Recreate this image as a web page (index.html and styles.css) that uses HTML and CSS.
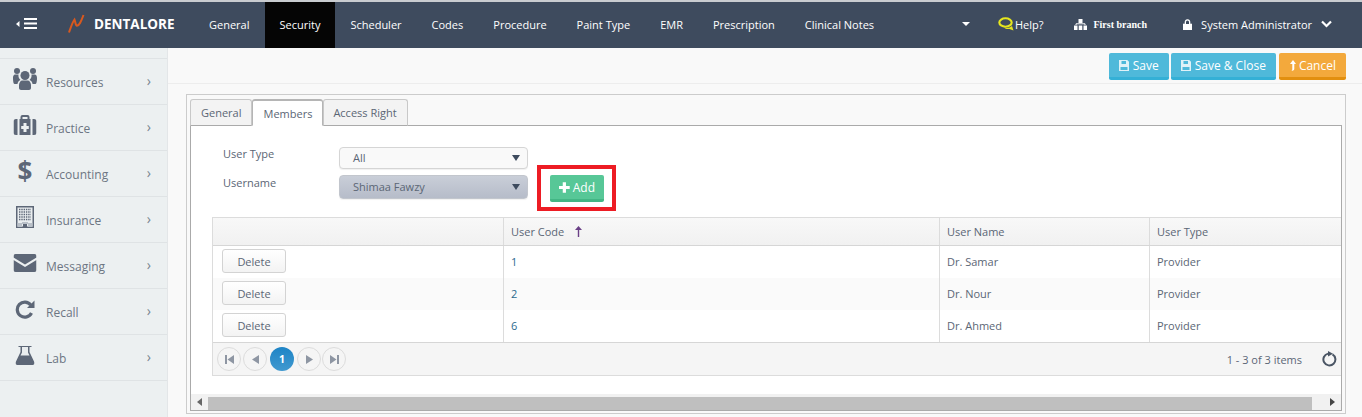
FILE: index.html
```html
<!DOCTYPE html>
<html lang="en">
<head>
<meta charset="utf-8">
<title>Dentalore - Security</title>
<link rel="stylesheet" href="styles.css">
</head>
<body>
<header class="topbar">
  <div class="toggle">
    <svg width="21" height="12" viewBox="0 0 21 12"><path d="M0 6l3.500-3v6z" fill="#fff"/><path d="M8 1h13M8 5.500h13M8 10h13" stroke="#fff" stroke-width="2"/></svg>
  </div>
  <div class="brand">
    <svg width="18" height="20" viewBox="0 0 18 20"><path d="M1 18.500C3 13 4.500 8 6.500 5.500c.8 2 .8 4.800 2 6 2.500 1 4.800-4.500 7-10.500" fill="none" stroke="#d8591f" stroke-width="2"/></svg>
    <span>DENTALORE</span>
  </div>
  <nav class="mainnav">
    <a>General</a><a class="active">Security</a><a>Scheduler</a><a>Codes</a><a>Procedure</a><a>Paint Type</a><a>EMR</a><a>Prescription</a><a>Clinical Notes</a>
  </nav>
  <div class="topright">
    <span class="caret"></span>
    <span class="help">
      <svg width="17" height="14" viewBox="0 0 17 14"><ellipse cx="7.500" cy="5.500" rx="6.200" ry="4.200" fill="none" stroke="#e6e61e" stroke-width="2.100"/><path d="M6 10.500c3 .8 6 .5 8-1.500l1.500 4.500-4-1.500c-2 .3-4 0-5.500-1.500z" fill="#e6e61e"/></svg>Help?
    </span>
    <span class="branch">
      <svg width="13" height="11" viewBox="0 0 13 11"><path d="M4.500 0h4v4h-4zM0 6.500h3.500V11H0zM4.700 6.500h3.600V11H4.700zM9.500 6.500H13V11H9.500z" fill="#fff"/><path d="M2 6V4.800h9V6" fill="none" stroke="#fff"/></svg>
      <b>First branch</b>
    </span>
    <span class="user">
      <svg width="9" height="11" viewBox="0 0 9 11"><path d="M0 5h9v6H0zM2 5V3a2.500 2.500 0 015 0v2" fill="#fff" stroke="#fff" stroke-width=".6"/><path d="M3 5V3a1.500 1.500 0 013 0v2" fill="#3e4b5e"/></svg>
      System Administrator
      <svg class="chev" width="11" height="8" viewBox="0 0 11 8"><path d="M1 1.500l4.500 4.500L10 1.500" fill="none" stroke="#fff" stroke-width="2.200"/></svg>
    </span>
  </div>
</header>

<div class="body">
  <aside class="sidebar">
    <div class="side-item">
      <svg class="side-ico" width="24" height="22" viewBox="0 0 24 22"><g fill="#5d6777"><circle cx="4" cy="3" r="3"/><circle cx="20" cy="3" r="3"/><circle cx="12" cy="7.500" r="4.500"/><path d="M0 10c0-3 1.500-3.500 2.500-3.500h3c-.3 2 .3 4 2 5.500C5.500 13 4.500 14.500 4.500 16H1.500C.5 16 0 13 0 10zM24 10c0-3-1.500-3.500-2.500-3.500h-3c.3 2-.3 4-2 5.500 2 1 3 2.500 3 4h3c1 0 1.500-3 1.500-5.500zM6 17c0-2.500 2-4.500 3-4.500h6c1 0 3 2 3 4.500v3c0 1-1 2-2 2H8c-1 0-2-1-2-2z"/></g></svg>
      <span class="side-label">Resources</span><span class="side-arrow">›</span>
    </div>
    <div class="side-item">
      <svg class="side-ico" width="23" height="20" viewBox="0 0 23 20"><path fill="#5d6777" fill-rule="evenodd" d="M7 4V2a2 2 0 012-2h5a2 2 0 012 2v2h1v16H6V4zm2 0h5V2H9zM10 8v3H7.700v3H10v3h3v-3h2.300v-3H13V8z"/><path fill="#5d6777" d="M0 6.500A2.500 2.500 0 012.500 4H4v16H2.500A2.500 2.500 0 010 17.500zM23 6.500A2.500 2.500 0 0020.500 4H19v16h1.500a2.500 2.500 0 002.500-2.500z"/></svg>
      <span class="side-label">Practice</span><span class="side-arrow">›</span>
    </div>
    <div class="side-item">
      <span class="side-ico dollar">$</span>
      <span class="side-label">Accounting</span><span class="side-arrow">›</span>
    </div>
    <div class="side-item">
      <svg class="side-ico" width="18" height="22" viewBox="0 0 18 22"><rect width="18" height="22" fill="#5d6777"/><rect x="1.500" y="1.500" width="15" height="19" fill="#e9edef"/><path d="M3 3.500h12M3 6h12M3 8.500h12M3 11h12M3 13.500h12" stroke="#5d6777" stroke-width="1.300" stroke-dasharray="1.400 .9"/><path d="M1.500 17h4.500v4H1.500zM12 17h4.500v4H12zM6 16h6v2H6z" fill="#b9c0c8"/><rect x="7" y="18" width="4" height="4" fill="#5d6777"/></svg>
      <span class="side-label">Insurance</span><span class="side-arrow">›</span>
    </div>
    <div class="side-item">
      <svg class="side-ico" width="23" height="18" viewBox="0 0 23 18"><path fill="#5d6777" d="M2 0h19a2 2 0 012 2v1.600l-11.500 7L0 3.600V2a2 2 0 012-2zM0 6l11.500 7L23 6v10a2 2 0 01-2 2H2a2 2 0 01-2-2z"/></svg>
      <span class="side-label">Messaging</span><span class="side-arrow">›</span>
    </div>
    <div class="side-item">
      <svg class="side-ico" width="20" height="20" viewBox="0 0 20 20"><path fill="none" stroke="#5d6777" stroke-width="3.200" d="M16.500 14a7.500 7.500 0 11-.8-8"/><path fill="#5d6777" d="M19.500 1.500v7.500h-7.500z"/></svg>
      <span class="side-label">Recall</span><span class="side-arrow">›</span>
    </div>
    <div class="side-item">
      <svg class="side-ico" width="19" height="20" viewBox="0 0 19 20"><path fill="#5d6777" d="M3 1h13v1h-2v5l5 10.500c.3 1-.5 2.500-2 2.500H2C.5 20-.3 18.500 0 17.500L5 7V2H3z"/><path fill="#e9edef" d="M6.500 2h6v5.500l1.500 3H5l1.500-3z"/></svg>
      <span class="side-label">Lab</span><span class="side-arrow">›</span>
    </div>
  </aside>

  <main class="content">
    <div class="toolbar">
      <button class="btn info">
        <svg width="10" height="11" viewBox="0 0 10 11"><path fill="#dff2f8" fill-rule="evenodd" d="M0 0h8.200L10 1.800V11H0zm2.500 1v3h4.500V1zm-1 6v3h7V7z"/></svg>Save</button>
      <button class="btn info">
        <svg width="10" height="11" viewBox="0 0 10 11"><path fill="#dff2f8" fill-rule="evenodd" d="M0 0h8.200L10 1.800V11H0zm2.500 1v3h4.500V1zm-1 6v3h7V7z"/></svg>Save &amp; Close</button>
      <button class="btn warn">
        <svg width="6" height="11" viewBox="0 0 6 11"><path fill="#fff" d="M3 0l3 4H4.300v4.500c0 1 0 2-3 2.500 1-.7 1-1.500 1-2.500V4H0z"/></svg>Cancel</button>
    </div>

    <section class="panel">
      <div class="tabs">
        <span class="tab">General</span>
        <span class="tab current">Members</span>
        <span class="tab last">Access Right</span>
      </div>
      <div class="tabbody">
        <div class="form">
          <div class="fields">
            <label class="flabel">User Type</label>
            <div class="select"><span>All</span><i class="sel-caret"></i></div>
            <label class="flabel lower">Username</label>
            <div class="select filled"><span>Shimaa Fawzy</span><i class="sel-caret"></i></div>
          </div>
          <div class="highlight">
            <button class="btn add">
              <svg width="11" height="11" viewBox="0 0 10 10"><path fill="#fff" d="M3.500 0h3v3.500H10v3H6.500V10h-3V6.500H0v-3h3.500z"/></svg>Add</button>
          </div>
        </div>

        <div class="grid">
          <div class="row head">
            <div class="cell c1"></div>
            <div class="cell c2">User Code
              <svg class="sort" width="7" height="11" viewBox="0 0 7 11"><path fill="#6a3f86" d="M3.500 0L7 4H4.200v7H2.800V4H0z"/></svg>
            </div>
            <div class="cell c3">User Name</div>
            <div class="cell c4">User Type</div>
          </div>
          <div class="row data">
            <div class="cell c1"><button class="del">Delete</button></div>
            <div class="cell c2 link">1</div>
            <div class="cell c3">Dr. Samar</div>
            <div class="cell c4">Provider</div>
          </div>
          <div class="row data alt">
            <div class="cell c1"><button class="del">Delete</button></div>
            <div class="cell c2 link">2</div>
            <div class="cell c3">Dr. Nour</div>
            <div class="cell c4">Provider</div>
          </div>
          <div class="row data">
            <div class="cell c1"><button class="del">Delete</button></div>
            <div class="cell c2 link">6</div>
            <div class="cell c3">Dr. Ahmed</div>
            <div class="cell c4">Provider</div>
          </div>
          <div class="pager">
            <span class="pg"><svg width="9" height="9" viewBox="0 0 9 9"><path fill="#8e96a3" d="M0 0h2v9H0zM9 0v9L2.500 4.500z"/></svg></span>
            <span class="pg"><svg width="7" height="9" viewBox="0 0 7 9"><path fill="#8e96a3" d="M7 0v9L0 4.500z"/></svg></span>
            <span class="pg now">1</span>
            <span class="pg"><svg width="7" height="9" viewBox="0 0 7 9"><path fill="#8e96a3" d="M0 0v9l7-4.500z"/></svg></span>
            <span class="pg tail"><svg width="9" height="9" viewBox="0 0 9 9"><path fill="#8e96a3" d="M9 0H7v9h2zM0 0v9l6.500-4.500z"/></svg></span>
            <span class="pg-info">1 - 3 of 3 items</span>
            <svg class="refresh" width="15" height="16" viewBox="0 0 15 16"><path fill="none" stroke="#4a5564" stroke-width="2" d="M10.500 3.300a6 6 0 11-4.500-.7"/><path fill="#4a5564" d="M6 0l5 2.800L6 5.500z"/></svg>
          </div>
        </div>

        <div class="hscroll">
          <span class="sbtn"><i class="tri left"></i></span>
          <span class="thumb"></span>
          <span class="sbtn end"><i class="tri right"></i></span>
        </div>
      </div>
    </section>
  </main>
</div>
</body>
</html>
```

FILE: styles.css
```css
* { box-sizing: border-box; }
html, body { margin: 0; height: 417px; overflow: hidden; }
body { font-family: "Open Sans", sans-serif; font-size: 11px; color: #5b6675; background: #f9f9f9; }
button { font-family: inherit; cursor: pointer; }

.topbar { height: 48px; background: #3e4b5e; border-top: 2px solid #c9ccd0; color: #fff; display: flex; align-items: flex-start; }
.toggle { width: 68px; height: 44px; padding-left: 16px; display: flex; align-items: center; }
.brand { width: 126px; height: 44px; display: flex; align-items: center; gap: 8px; font-weight: 700; font-size: 13.500px; color: #fff; }
.mainnav { display: flex; height: 46px; }
.mainnav a { display: flex; align-items: center; padding: 0 15px 2px; font-size: 11px; color: #fff; }
.mainnav a.active { background: #050505; margin-left: 1px; padding-left: 14px; }
.topright { margin-left: auto; height: 44px; display: flex; align-items: center; padding-right: 30px; font-size: 11px; }
.caret { width: 0; height: 0; border: 4px solid transparent; border-top-color: #fff; border-bottom: 0; margin-right: 29px; }
.help { display: flex; align-items: center; margin-right: 31px; }
.help svg { margin-left: -1px; }
.branch { display: flex; align-items: center; gap: 6px; margin-right: 36px; }
.branch b { font-family: "Liberation Serif", serif; font-size: 10px; font-weight: 700; }
.user { display: flex; align-items: center; gap: 9px; }

.body { display: flex; height: 369px; }
.sidebar { width: 168px; flex: none; background: #ecf0f1; border-right: 1px solid #e3e6e8; padding-top: 10px; }
.side-item { position: relative; height: 46px; border-top: 1px solid #dfe3e5; display: flex; align-items: center; color: #6c7683; font-size: 12px; padding-left: 46px; }
.side-item:last-child { height: 47px; border-bottom: 1px solid #dfe3e5; }
.side-label { padding-top: 2px; }
.side-arrow { margin-left: auto; margin-right: 16px; font-size: 14px; margin-top: -2px; color: #7a8490; }
.side-ico { position: absolute; left: 25px; top: 20px; transform: translate(-50%, -50%); }
.dollar { font-size: 26px; font-weight: 700; line-height: 1; color: #5d6777; }

.content { flex: 1; min-width: 0; background: #f9f9f9; display: flex; flex-direction: column; }
.toolbar { height: 36px; border-bottom: 1px solid #ededed; display: flex; justify-content: flex-end; align-items: flex-start; gap: 2px; padding: 5px 16px 0 0; }
.btn { height: 27px; border: 0; border-radius: 2px; color: #fff; font-size: 12px; padding: 0 10px; display: inline-flex; align-items: center; gap: 4px; }
.btn.info { background: #4fb9da; border-bottom: 3px solid #34b0d6; }
.btn.warn { background: #f3a93c; border-bottom: 3px solid #e28f0f; margin-left: 1px; padding: 0 10px 0 11px; gap: 3px; }
.btn.add { background: #57c797; border-bottom: 3px solid #43b685; font-size: 12px; padding: 0 9px; gap: 3px; }

.panel { margin: 10px 16px 0 18px; height: 320px; border: 1px solid #ccc; padding: 4px 3px 4px 3px; background: #f9f9f9; display: flex; flex-direction: column; }
.tabs { display: flex; height: 27px; position: relative; z-index: 1; }
.tab { height: 27px; padding: 0 10px; display: flex; align-items: center; border: 1px solid #c8c8c8; border-bottom: 1px solid #aaa; border-radius: 3px 3px 0 0; background: #f3f3f3; color: #5b6675; font-size: 11px; }
.tab.current { background: #fff; border-top: 2px solid #b5b5b5; border-color: #b5b5b5; border-bottom-color: #fff; }
.tab.last { padding: 0 10px 0 9px; }
.tabbody { flex: 1; margin-top: -1px; background: #fff; border: 1px solid #aaa; display: flex; flex-direction: column; padding-top: 21px; }

.form { display: flex; height: 65px; padding-left: 32px; align-items: flex-start; }
.fields { display: grid; grid-template-columns: 116px 189px; grid-template-rows: 22px 24px; row-gap: 6px; }
.flabel { font-size: 11px; color: #5b6675; margin-top: -1px; }
.flabel.lower { margin-top: 0; }
.select { border: 1px solid #d5d5d5; border-radius: 4px; background: #f9f9f9; display: flex; align-items: center; justify-content: space-between; padding: 0 7px 1px 13px; font-size: 11px; box-shadow: 0 1px 1px rgba(0,0,0,.06); }
.select.filled { background: linear-gradient(#c9ced8, #b6bcc9); border-color: #c2c6cd; }
.sel-caret { width: 0; height: 0; border: 4px solid transparent; border-top: 6px solid #3e4b5e; border-bottom: 0; margin-top: 1px; }
.highlight { margin: 18px 0 0 9px; border: 4px solid #ed1c24; padding: 6px 8px 5px 9px; height: 46px; }
.highlight .btn { width: 54px; height: 27px; justify-content: center; }

.grid { margin: 5px 0 0 21px; border: 1px solid #dcdcdc; border-right: 0; background: #fff; }
.row { display: flex; height: 32px; align-items: stretch; }
.row.alt { background: #fafafa; }
.row.head { height: 28px; background: linear-gradient(#f8f8f8, #f1f1f1); border-bottom: 1px solid #d6d6d6; }
.cell { display: flex; align-items: center; padding-left: 7px; border-left: 1px solid #dcdcdc; font-size: 11px; color: #5b6675; }
.row.data .cell { padding-bottom: 2px; }
.cell.c1 { width: 290px; border-left: 0; padding-left: 9px; }
.cell.c2 { width: 436px; }
.cell.c3 { width: 210px; }
.cell.c4 { flex: 1; }
.cell.link { color: #2c6a8e; }
.sort { margin-left: 11px; }
.del { width: 64px; height: 24px; background: linear-gradient(#fff, #f3f3f3); border: 1px solid #d3d3d3; border-radius: 3px; color: #5b6675; font-size: 11px; padding: 0; }
.pager { height: 33px; border-top: 1px solid #d6d6d6; background: #f5f5f5; display: flex; align-items: center; padding-left: 4px; gap: 2px; }
.pg { width: 24px; height: 24px; border-radius: 50%; border: 1px solid #dcdcdc; display: flex; align-items: center; justify-content: center; font-size: 10.500px; font-weight: 700; }
.pg.now { background: linear-gradient(#1d84c6, #4199cf); border: 0; color: #fff; margin: 0 1px; }
.pg.tail { margin-left: -1px; }
.pg-info { margin-left: auto; font-size: 11px; margin-right: 18px; }
.refresh { margin-right: 4px; }

.hscroll { margin-top: 18px; height: 16px; background: #f1f1f1; display: flex; align-items: center; }
.sbtn { width: 17px; height: 16px; display: flex; align-items: center; justify-content: center; flex: none; }
.sbtn.end { margin-left: auto; }
.thumb { width: 1104px; height: 13px; margin-top: 2px; background: #bfbfbf; }
.tri { width: 0; height: 0; border: 4px solid transparent; }
.tri.left { border-right: 5px solid #666; border-left: 0; }
.tri.right { border-left: 5px solid #444; border-right: 0; }
```
